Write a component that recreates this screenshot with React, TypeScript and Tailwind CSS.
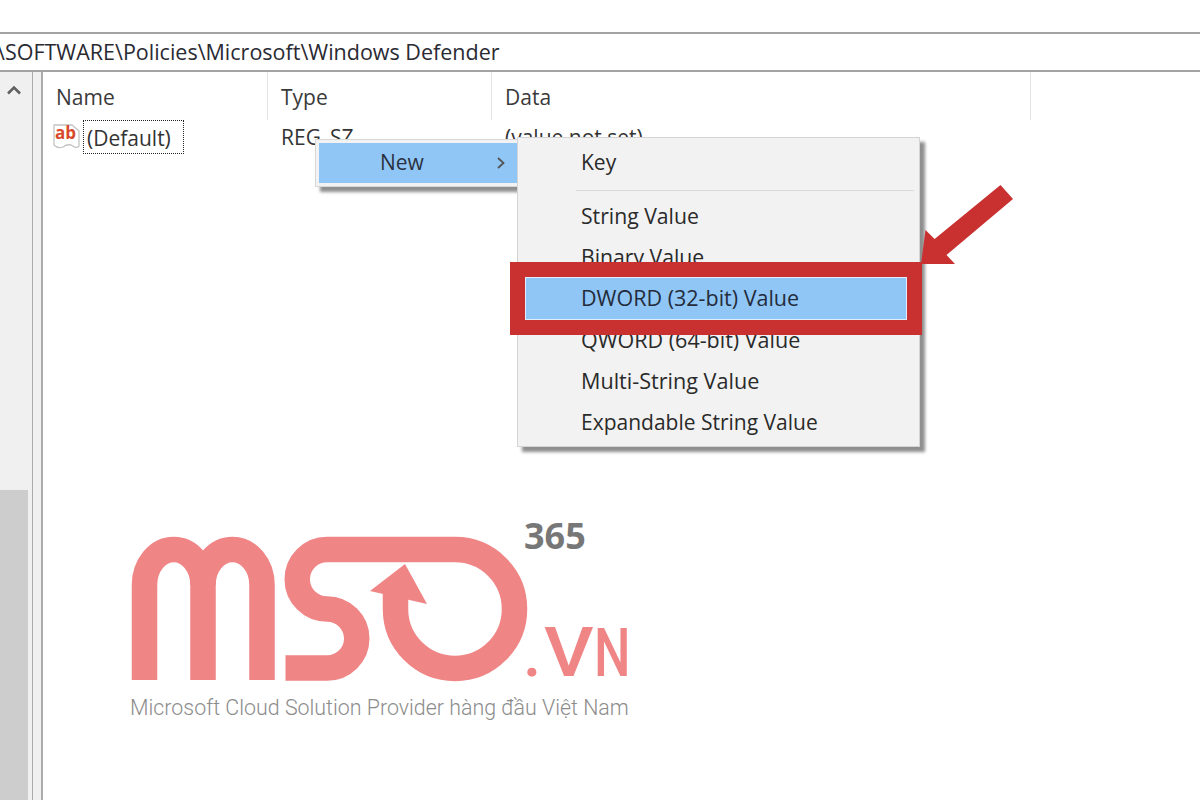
const font = "[font-family:'Open_Sans','Noto_Sans',sans-serif]";

function Chevron() {
  return (
    <svg width="16" height="10" viewBox="0 0 16 10" fill="none">
      <path d="M2 8.5 L8 2.5 L14 8.5" stroke="#606060" strokeWidth="2.6" />
    </svg>
  );
}

function RegIcon() {
  return (
    <svg width="28" height="30" viewBox="0 0 28 30" className="shrink-0">
      <path d="M1 3 H19 L26 9 V24 Q23 27 20 24 Q15 21 10 25 Q5 27 1 23 Z" fill="#fff" stroke="#c4c4c4" strokeWidth="1.3" />
      <text x="2" y="17" fontFamily="Open Sans, sans-serif" fontWeight="700" fontSize="17" fill="#d8492c">ab</text>
    </svg>
  );
}

function MenuRow({ label, y, size }: { label: string; y: string; size: string }) {
  return <div className={`absolute left-[63px] leading-[28px] text-[#2a2a2a] whitespace-nowrap ${y} ${size}`}>{label}</div>;
}

function Logo() {
  return (
    <div className="absolute left-[130px] top-[510px] w-[510px] h-[220px]">
      <svg width="510" height="180" viewBox="130 510 510 180" fill="none" className="absolute left-0 top-0">
        <g stroke="#f08586" strokeWidth="25.5">
          <path d="M144.5 680 V585 A29.25 35.5 0 0 1 203 585 V680" />
          <path d="M203 585 A29.5 35.5 0 0 1 262 585 V680" />
          <path d="M285.5 668 H327 A29.75 29.5 0 0 0 327 609 A29.75 29.75 0 0 1 327 549.5 H455 A59.5 59.5 0 1 1 395.5 609 V592" />
        </g>
        <path d="M370 591 L405 564 L427 604 Z" fill="#f08586" />
      </svg>
      <div className="absolute left-[394px] top-[4px] text-[36px] leading-[44px] font-bold text-[#777777] [font-family:'Open_Sans',sans-serif]">365</div>
      <div className="absolute left-[393px] top-[103px] flex items-baseline text-[#f08586] font-medium [font-family:Roboto,sans-serif] leading-[80px]">
        <span className="text-[66px]">.</span>
        <span className="text-[68px] ml-[3px] inline-block origin-left scale-x-[1.13]">V</span>
        <span className="text-[66px] ml-[6px] inline-block origin-left scale-x-[0.78]">N</span>
      </div>
      <div className="absolute left-0 top-[184px] text-[21.4px] leading-[28px] font-light text-[#8c8c8c] whitespace-nowrap [font-family:Roboto,sans-serif]">
        Microsoft Cloud Solution Provider hàng đầu Việt Nam
      </div>
    </div>
  );
}

export default function App() {
  return (
    <div className={`relative w-[1200px] h-[800px] overflow-hidden bg-white flex flex-col ${font}`}>
      <div className="h-[32px] shrink-0" />
      <div className="h-[40px] shrink-0 border-y-2 border-[#a3a3a3] flex items-center overflow-hidden">
        <span className="-ml-[3px] text-[21.5px] text-[#2a2a33] whitespace-nowrap">\SOFTWARE\Policies\Microsoft\Windows Defender</span>
      </div>
      <div className="flex-1 flex min-h-0">
        <div className="w-[32px] shrink-0 bg-[#f0f0f0] flex flex-col">
          <div className="h-[24px] flex items-end pl-[6px] pb-[1px]"><Chevron /></div>
          <div className="flex-1" />
          <div className="w-[28px] h-[310px] bg-[#cdcdcd]" />
        </div>
        <div className="w-[11px] shrink-0 bg-[#f0f0f0] border-l-[1.5px] border-r-2 border-[#a9abad]" />
        <div className="flex-1 flex flex-col">
          <div className="flex h-[48px] text-[21px] text-[#3a3a3a]">
            <div className="w-[225px] border-r border-[#e5e5e5] pl-[13px] pt-[9px] leading-[32px]">Name</div>
            <div className="w-[224px] border-r border-[#e5e5e5] pl-[13px] pt-[9px] leading-[32px]">Type</div>
            <div className="w-[539px] border-r border-[#e5e5e5] pl-[13px] pt-[9px] leading-[32px]">Data</div>
          </div>
          <div className="flex items-center h-[34px] text-[21px] text-[#333]">
            <div className="w-[225px] flex items-center pl-[10px]">
              <RegIcon />
              <span className="ml-[2px] w-[101px] h-[34px] pl-[3px] leading-[34px] border border-dotted border-[#222] whitespace-nowrap">(Default)</span>
            </div>
            <div className="w-[224px] pl-[13px] pt-[1px]">REG_SZ</div>
            <div className="pl-[13px] pt-[1px]">(value not set)</div>
          </div>
        </div>
      </div>

      {/* New menu */}
      <div className="absolute left-[315px] top-[139px] w-[206px] h-[48px] bg-[#f2f2f2] border border-[#d8d8d8] p-[3px] shadow-[5px_5px_3px_#8f8f8f]">
        <div className="h-full bg-[#90c6f5] flex items-center justify-between pl-[61px] pr-[11px] text-[21px] text-[#2b3140]">
          <span className="-mt-[1px]">New</span>
          <svg width="10" height="14" viewBox="0 0 10 14" fill="none"><path d="M2 2 L7.5 7 L2 12" stroke="#555" strokeWidth="1.8" /></svg>
        </div>
      </div>

      {/* Submenu */}
      <div className="absolute left-[517px] top-[137px] w-[403px] h-[310px] bg-[#f2f2f2] border border-[#d4d4d4] shadow-[5px_5px_3px_#8f8f8f]">
        <MenuRow label="Key" y="top-[10px]" size="text-[21px]" />
        <div className="absolute left-[58px] right-[5px] top-[52px] h-px bg-[#d9d9d9]" />
        <MenuRow label="String Value" y="top-[64px]" size="text-[21.2px]" />
        <MenuRow label="Binary Value" y="top-[105px]" size="text-[21.2px]" />
        <MenuRow label="QWORD (64-bit) Value" y="top-[188px]" size="text-[21.5px]" />
        <MenuRow label="Multi-String Value" y="top-[229px]" size="text-[21.6px]" />
        <MenuRow label="Expandable String Value" y="top-[270px]" size="text-[21px]" />
      </div>

      {/* Red highlight */}
      <div className="absolute left-[510px] top-[262px] w-[412px] h-[73px] border-[15px] border-[#c93131] bg-[#90c6f5] flex items-center pl-[56px] text-[21.5px] text-[#242c3c] shadow-[inset_0_0_0_1px_#dfeefb] whitespace-nowrap">
        <span className="-mt-[1px]">DWORD (32-bit) Value</span>
      </div>

      {/* Arrow */}
      <svg width="100" height="90" viewBox="915 180 100 90" className="absolute left-[915px] top-[180px]">
        <path d="M1000.5 185 L1013 199 L946.5 255 L955 264 L921 264 L925.5 230 L934.6 239 Z" fill="#c93131" />
      </svg>

      <Logo />
    </div>
  );
}
